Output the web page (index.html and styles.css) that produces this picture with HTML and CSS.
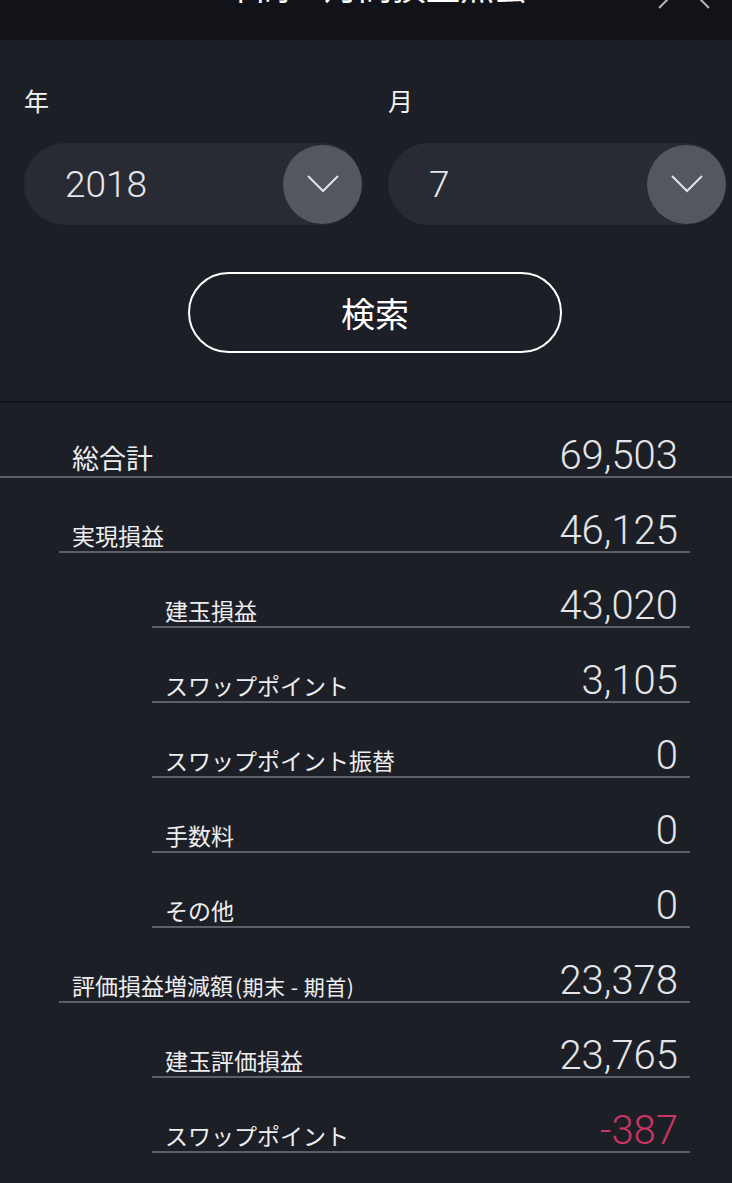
FILE: index.html
```html
<!DOCTYPE html>
<html>
<head>
  <meta charset="utf-8">
  <title>損益照会</title>
  <link rel="stylesheet" href="styles.css">
</head>
<body>
  <div class="header">
    <h1 class="header-title">年間・月間損益照会</h1>
    <svg class="close-icon" width="52" height="52" viewBox="0 0 52 52">
      <line x1="1" y1="1" x2="51" y2="51" stroke="#b4b6bc" stroke-width="2"/>
      <line x1="51" y1="1" x2="1" y2="51" stroke="#b4b6bc" stroke-width="2"/>
    </svg>
  </div>

  <div class="search-area">
    <div class="select-grid">
      <div class="select-group">
        <label class="select-label">年</label>
        <div class="select-box">
          <span class="select-value">2018</span>
          <span class="select-arrow">
            <svg width="32" height="18" viewBox="0 0 32 18"><polyline points="1,1 16,16 31,1" fill="none" stroke="#e2e3e6" stroke-width="2"/></svg>
          </span>
        </div>
      </div>
      <div class="select-group">
        <label class="select-label">月</label>
        <div class="select-box">
          <span class="select-value">7</span>
          <span class="select-arrow">
            <svg width="32" height="18" viewBox="0 0 32 18"><polyline points="1,1 16,16 31,1" fill="none" stroke="#e2e3e6" stroke-width="2"/></svg>
          </span>
        </div>
      </div>
    </div>
    <div class="button-row">
      <button class="search-button" type="button">検索</button>
    </div>
  </div>

  <div class="result-list">
    <div class="row row-total">
      <span class="row-label">総合計</span>
      <span class="row-value">69,503</span>
    </div>
    <div class="row row-lv1">
      <span class="row-label">実現損益</span>
      <span class="row-value">46,125</span>
    </div>
    <div class="row row-lv2">
      <span class="row-label">建玉損益</span>
      <span class="row-value">43,020</span>
    </div>
    <div class="row row-lv2">
      <span class="row-label">スワップポイント</span>
      <span class="row-value">3,105</span>
    </div>
    <div class="row row-lv2">
      <span class="row-label">スワップポイント振替</span>
      <span class="row-value">0</span>
    </div>
    <div class="row row-lv2">
      <span class="row-label">手数料</span>
      <span class="row-value">0</span>
    </div>
    <div class="row row-lv2">
      <span class="row-label">その他</span>
      <span class="row-value">0</span>
    </div>
    <div class="row row-lv1">
      <span class="row-label">評価損益増減額<small>(期末 - 期首)</small></span>
      <span class="row-value">23,378</span>
    </div>
    <div class="row row-lv2">
      <span class="row-label">建玉評価損益</span>
      <span class="row-value">23,765</span>
    </div>
    <div class="row row-lv2">
      <span class="row-label">スワップポイント</span>
      <span class="row-value negative">-387</span>
    </div>
  </div>
</body>
</html>
```

FILE: styles.css
```css
body {
  margin: 0;
  background-color: #1d1f27;
  color: #ececee;
  font-family: "Noto Sans CJK JP", "Noto Sans", sans-serif;
  overflow: hidden;
}

.header {
  height: 40px;
  background-color: #111319;
  display: flex;
  align-items: flex-start;
  overflow: hidden;
}

.header-title {
  flex: 1;
  margin: -31px 0 0 0;
  padding-left: 100px;
  text-align: center;
  font-size: 34px;
  font-weight: normal;
  line-height: 1;
  color: #ffffff;
}

.close-icon {
  margin: -43px 22px 0 8px;
  flex-shrink: 0;
}

/* 検索エリア */
.search-area {
  padding: 48px 6px 48px 24px;
  border-bottom: 2px solid #101218;
}

.select-grid {
  display: grid;
  grid-template-columns: 338px 338px;
  column-gap: 26px;
}

.select-label {
  display: block;
  font-size: 25px;
  line-height: 1;
  margin-bottom: 30px;
  color: #f4f4f6;
}

.select-box {
  height: 82px;
  border-radius: 41px;
  background-color: #292b34;
  display: flex;
  align-items: center;
  justify-content: space-between;
}

.select-value {
  padding-left: 41px;
  font-family: Roboto, "Liberation Sans", sans-serif;
  font-weight: 300;
  font-size: 37px;
  color: #e6e7ea;
}

.select-arrow {
  width: 79px;
  height: 79px;
  border-radius: 50%;
  background-color: #54575f;
  display: flex;
  align-items: center;
  justify-content: center;
}

.button-row {
  display: flex;
  justify-content: center;
  margin-top: 47px;
}

.search-button {
  width: 374px;
  height: 81px;
  border: 2px solid #ffffff;
  border-radius: 41px;
  background-color: transparent;
  color: #ffffff;
  font-family: "Noto Sans CJK JP", sans-serif;
  font-size: 34px;
  cursor: pointer;
}

/* 結果一覧 */
.row {
  box-sizing: border-box;
  height: 75px;
  display: flex;
  justify-content: space-between;
  align-items: flex-end;
  border-bottom: 2px solid #5d5f66;
}

.row-label {
  font-size: 23px;
  line-height: 1;
  margin-bottom: 4px;
  padding-left: 13px;
  color: #eeeef0;
}

.row-label small {
  font-size: 21px;
  letter-spacing: 0.5px;
  margin-left: 2px;
}

.row-value {
  font-family: Roboto, "Liberation Sans", sans-serif;
  font-weight: 300;
  font-size: 40px;
  line-height: 1;
  padding-right: 12px;
  color: #e4e5e8;
}

.row-value.negative {
  color: #c93564;
}

.row-total {
  height: 75px;
}

.row-total .row-label {
  font-size: 27px;
  padding-left: 72px;
  margin-bottom: 5px;
}

.row-total .row-value {
  padding-right: 54px;
}

.row-lv1 {
  margin-left: 59px;
  margin-right: 42px;
}

.row-lv2 {
  margin-left: 152px;
  margin-right: 42px;
}
```
